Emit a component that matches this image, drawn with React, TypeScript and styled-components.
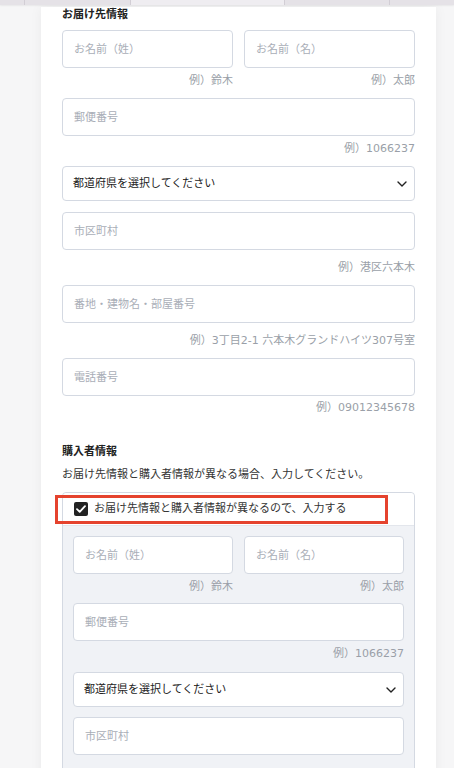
import styled, { createGlobalStyle } from "styled-components";

const GlobalStyle = createGlobalStyle`
    html, body {
        margin: 0;
        padding: 0;
        background: #f6f6f7;
        font-family: "DejaVu Sans", "Noto Sans CJK JP", sans-serif;
        color: #222;
        -webkit-font-smoothing: antialiased;
    }
    * {
        box-sizing: border-box;
    }
`;

const tabs = [
    { width: 25, light: false },
    { width: 106, light: false },
    { width: 154, light: true },
    { width: 105, light: false },
    { width: 64, light: false },
];

const Chevron = () => (
    <svg width="10" height="6" viewBox="0 0 10 6" fill="none">
        <path
            d="M1 1l4 4 4-4"
            stroke="#222"
            strokeWidth="1.4"
            strokeLinecap="round"
            strokeLinejoin="round"
        />
    </svg>
);

const Check = () => (
    <svg width="10" height="8" viewBox="0 0 10 8" fill="none">
        <path
            d="M1 4.2l2.7 2.6L9 1.2"
            stroke="#fff"
            strokeWidth="1.8"
            strokeLinecap="round"
            strokeLinejoin="round"
        />
    </svg>
);

type AddressProps = { inner?: boolean };

const AddressFields = ({ inner }: AddressProps) => (
    <>
        <NameRow>
            <Field $mb={inner ? 8 : 9}>
                <TextInput placeholder="お名前（姓）" />
                <Hint $mt={5}>例）鈴木</Hint>
            </Field>
            <Field $mb={inner ? 8 : 9}>
                <TextInput placeholder="お名前（名）" />
                <Hint $mt={5}>例）太郎</Hint>
            </Field>
        </NameRow>
        <Field $mb={inner ? 10 : 9}>
            <TextInput placeholder="郵便番号" />
            <Hint $mt={5}>例）1066237</Hint>
        </Field>
        <Field $mb={inner ? 10 : 11}>
            <SelectWrap>
                <Select defaultValue="">
                    <option value="">都道府県を選択してください</option>
                    <option value="tokyo">東京都</option>
                </Select>
                <ChevronBox>
                    <Chevron />
                </ChevronBox>
            </SelectWrap>
        </Field>
        <Field $mb={9}>
            <TextInput placeholder="市区町村" />
            {!inner && <Hint $mt={10}>例）港区六本木</Hint>}
        </Field>
        {!inner && (
            <>
                <Field $mb={9}>
                    <TextInput placeholder="番地・建物名・部屋番号" />
                    <Hint $mt={10}>例）3丁目2-1 六本木グランドハイツ307号室</Hint>
                </Field>
                <Field $mb={0}>
                    <TextInput placeholder="電話番号" />
                    <Hint $mt={4}>例）09012345678</Hint>
                </Field>
            </>
        )}
    </>
);

const App = () => {
    return (
        <>
            <GlobalStyle />
            <TabStrip>
                {tabs.map((t, i) => (
                    <Tab key={i} $light={t.light} style={{ width: t.width }} />
                ))}
            </TabStrip>
            <Page>
                <Card>
                    <SectionTitle $mt={2}>お届け先情報</SectionTitle>
                    <AddressFields />

                    <SectionTitle $mt={28}>購入者情報</SectionTitle>
                    <Description>
                        お届け先情報と購入者情報が異なる場合、入力してください。
                    </Description>

                    <OptionBox>
                        <CheckRow>
                            <CheckMark>
                                <Check />
                            </CheckMark>
                            <CheckLabel>
                                お届け先情報と購入者情報が異なるので、入力する
                            </CheckLabel>
                            <Highlight />
                        </CheckRow>
                        <Panel>
                            <AddressFields inner />
                        </Panel>
                    </OptionBox>
                </Card>
            </Page>
        </>
    );
};

export default App;

const TabStrip = styled.div`
    display: flex;
    height: 5px;
    background: #e5e2e7;
    box-shadow: 0 1px 2px rgba(0, 0, 0, 0.06);
    position: relative;
    z-index: 1;
`;

const Tab = styled.div<{ $light: boolean }>`
    height: 100%;
    background: ${(p) => (p.$light ? "#efedf1" : "#e5e2e7")};
    border-right: 1px solid #d2ced5;
    &:last-child {
        border-right: none;
        flex: 1;
    }
`;

const Page = styled.div`
    padding-left: 41px;
    padding-right: 18px;
`;

const Card = styled.div`
    background: #fff;
    padding: 0 21px 40px;
    box-shadow: 0 0 12px rgba(0, 0, 0, 0.05);
    min-height: 763px;
`;

const SectionTitle = styled.div<{ $mt: number }>`
    margin-top: ${(p) => p.$mt}px;
    margin-bottom: 7px;
    font-size: 11px;
    line-height: 16px;
    font-weight: 700;
    color: #222;
`;

const Description = styled.div`
    font-size: 11px;
    line-height: 16px;
    color: #333;
    margin-bottom: 9px;
`;

const NameRow = styled.div`
    display: grid;
    grid-template-columns: 1fr 1fr;
    column-gap: 11px;
`;

const Field = styled.div<{ $mb: number }>`
    display: flex;
    flex-direction: column;
    margin-bottom: ${(p) => p.$mb}px;
`;

const TextInput = styled.input`
    height: 38px;
    width: 100%;
    border: 1px solid #d4d9e2;
    border-radius: 4px;
    background: #fff;
    padding: 0 11px;
    font-family: inherit;
    font-size: 11px;
    color: #222;
    outline: none;
    &::placeholder {
        color: #a9aeb7;
    }
`;

const Hint = styled.div<{ $mt: number }>`
    margin-top: ${(p) => p.$mt}px;
    font-size: 11px;
    line-height: 16px;
    color: #9a9fa8;
    text-align: right;
`;

const SelectWrap = styled.div`
    position: relative;
`;

const Select = styled.select`
    appearance: none;
    -webkit-appearance: none;
    display: block;
    width: 100%;
    height: 35px;
    border: 1px solid #d4d9e2;
    border-radius: 4px;
    background: #fff;
    padding: 0 30px 0 10px;
    font-family: inherit;
    font-size: 11px;
    color: #222;
    outline: none;
`;

const ChevronBox = styled.span`
    position: absolute;
    right: 8px;
    top: 50%;
    transform: translateY(-50%);
    display: flex;
    pointer-events: none;
`;

const OptionBox = styled.div`
    border: 1px solid #d4d9e2;
    border-radius: 4px;
`;

const CheckRow = styled.div`
    position: relative;
    display: flex;
    align-items: center;
    gap: 6px;
    height: 33px;
    padding-left: 11px;
    background: #fff;
    border-radius: 4px 4px 0 0;
    border-bottom: 1px solid #e3e6ec;
`;

const CheckMark = styled.span`
    width: 14px;
    height: 14px;
    border-radius: 2px;
    background: #222;
    display: flex;
    align-items: center;
    justify-content: center;
    flex-shrink: 0;
`;

const CheckLabel = styled.span`
    font-size: 11px;
    line-height: 16px;
    color: #333;
`;

const Highlight = styled.div`
    position: absolute;
    left: -8px;
    top: 2px;
    width: 333px;
    height: 29px;
    border: 3px solid #e5432e;
    pointer-events: none;
`;

const Panel = styled.div`
    background: #f0f2f6;
    padding: 10px 10px 40px;
`;
